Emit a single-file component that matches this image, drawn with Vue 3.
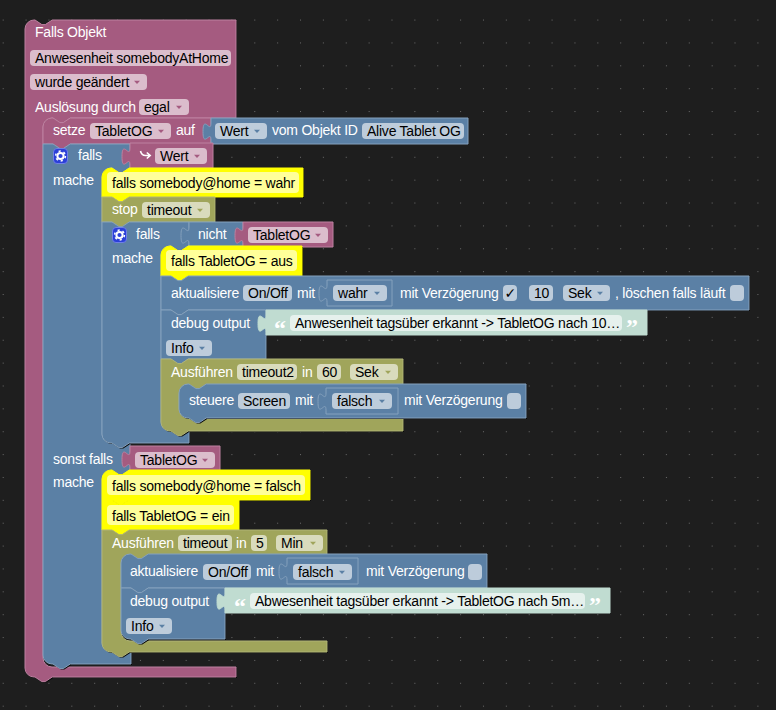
<script setup>
const N = 'l6.9,4.6 3.4,0 6.9,-4.6'
const NR = 'l-6.9,4.6 -3.4,0 -6.9,-4.6'
const R = 9

const top = (x, y, round) =>
  (round ? `M${x},${y + R} a${R},${R} 0 0 1 ${R},${-R}` : `M${x},${y}`) + ` H${x + 10} ${N}`
const bot = (x, y, round) =>
  `V${y} H${x + 27.2} ${NR} ` + (round ? `H${x + R} a${R},${R} 0 0 1 ${-R},${-R} Z` : `H${x} Z`)
const tab = (x, y) => `M${x},${y} V${y + 5} c0,11.4 -8,-9.1 -8,8.6 s8,-2.9 8,8.6`
const inner = (x, y1, y2, right) =>
  `V${y1} H${x + 27.2} ${NR} H${x + R} a${R},${R} 0 0 0 ${-R},${R} V${y2 - R} a${R},${R} 0 0 0 ${R},${R} H${right}`
const val = (x, y, r, b) => `${tab(x, y)} V${b} H${r} V${y} Z`

const C = {
  pink: { fill: '#a55b80', light: '#bd81a0' },
  blue: { fill: '#5b80a5', light: '#85a1bd' },
  olive: { fill: '#a0a55b', light: '#b0b476' },
  yellow: { fill: '#ffff00', light: '#ffff00' },
  mint: { fill: '#c0dcd1', light: '#c0dcd1' }
}

const stack = (c, d) => ({ c, d, dark: true })
const value = (c, d) => ({ c, d, dark: false })

const blocks = [
  stack('pink', `${top(25, 20, true)} H236 ${inner(43, 118, 667, 236)} ${bot(25, 677, true)}`),
  stack('pink', `${top(43, 118, true)} H211 ${bot(43, 144, false)}`),
  value('blue', val(211, 118, 468, 144)),
  stack('blue', `${top(43, 144, false)} H130 ${inner(102, 168, 443, 130)} V471 ${inner(102, 471, 652, 131)} ${bot(43, 664, true)}`),
  value('pink', val(130, 143, 213, 168)),
  stack('yellow', `${top(102, 168, true)} H303 ${bot(102, 197, false)}`),
  stack('olive', `${top(102, 197, false)} H215 ${bot(102, 222, false)}`),
  stack('blue', `${top(102, 222, false)} H189 ${inner(161, 246, 431, 189)} ${bot(102, 443, true)}`),
  value('blue', val(189, 222, 243, 246)),
  value('pink', val(243, 222, 333, 247)),
  stack('yellow', `${top(161, 246, true)} H302 ${bot(161, 276, false)}`),
  stack('blue', `${top(161, 276, false)} H749 ${bot(161, 310, false)}`),
  value('blue', val(327, 280, 392, 306)),
  stack('blue', `${top(161, 310, false)} H266 ${bot(161, 359, false)}`),
  value('mint', val(266, 310, 647, 335)),
  stack('olive', `${top(161, 359, false)} H403 ${inner(179, 385, 418, 403)} ${bot(161, 431, true)}`),
  stack('blue', `${top(179, 384, true)} H526 ${bot(179, 418, true)}`),
  value('blue', val(326, 388, 398, 414)),
  value('pink', val(130, 446, 220, 471)),
  stack('yellow', `${top(102, 470, true)} H310 ${bot(102, 500, false)}`),
  stack('yellow', `${top(102, 500, false)} H239 ${bot(102, 530, false)}`),
  stack('olive', `${top(102, 530, false)} H327 ${inner(121, 555, 641, 327)} ${bot(102, 652, true)}`),
  stack('blue', `${top(121, 554, true)} H487 ${bot(121, 588, false)}`),
  value('blue', val(287, 558, 358, 584)),
  stack('blue', `${top(121, 588, false)} H225 ${bot(121, 639, true)}`),
  value('mint', val(225, 588, 610, 613))
].map((b) => ({ ...b, ...C[b.c] }))

/* editable fields: x, y, width, height, text, has dropdown arrow, arrow colour */
const f = (x, y, w, text, c, h = 16) => ({ x, y, w, h, text, arrow: c ? C[c].fill : null })
const fields = [
  f(30, 50, 201, 'Anwesenheit somebodyAtHome'),
  f(30, 74, 117, 'wurde geändert', 'pink'),
  f(139, 99, 50, 'egal', 'pink'),
  f(90, 123, 81, 'TabletOG', 'pink'),
  f(215, 123, 52, 'Wert', 'blue'),
  f(362, 123, 102, 'Alive Tablet OG'),
  f(155, 148, 52, 'Wert', 'pink'),
  f(107, 172, 192, 'falls somebody@home = wahr', null, 21),
  f(142, 202, 68, 'timeout', 'olive'),
  f(248, 227, 80, 'TabletOG', 'pink'),
  f(166, 250, 131, 'falls TabletOG = aus', null, 21),
  f(243, 285, 49, 'On/Off'),
  f(333, 285, 54, 'wahr', 'blue'),
  f(529, 285, 24, '10'),
  f(563, 285, 47, 'Sek', 'blue'),
  f(290, 315, 332, 'Anwesenheit tagsüber erkannt -> TabletOG nach 10…'),
  f(166, 340, 46, 'Info', 'blue'),
  f(237, 364, 60, 'timeout2'),
  f(317, 364, 24, '60'),
  f(350, 364, 48, 'Sek', 'olive'),
  f(238, 393, 52, 'Screen'),
  f(332, 393, 60, 'falsch', 'blue'),
  f(135, 452, 80, 'TabletOG', 'pink'),
  f(107, 475, 198, 'falls somebody@home = falsch', null, 20),
  f(107, 505, 127, 'falls TabletOG = ein', null, 20),
  f(178, 535, 54, 'timeout'),
  f(251, 535, 16, '5'),
  f(276, 535, 47, 'Min', 'olive'),
  f(203, 564, 48, 'On/Off'),
  f(293, 564, 59, 'falsch', 'blue'),
  f(250, 593, 335, 'Abwesenheit tagsüber erkannt -> TabletOG nach 5m…'),
  f(126, 618, 46, 'Info', 'blue')
]

const checks = [
  { x: 503, y: 285, on: true },
  { x: 730, y: 285, on: false },
  { x: 507, y: 393, on: false },
  { x: 468, y: 564, on: false }
]

const labels = [
  [35, 37, 'Falls Objekt'],
  [35, 112, 'Auslösung durch'],
  [53, 135, 'setze'],
  [176, 135, 'auf'],
  [272, 135, 'vom Objekt ID'],
  [78, 160, 'falls'],
  [53, 185, 'mache'],
  [112, 214, 'stop'],
  [136, 239, 'falls'],
  [198, 239, 'nicht'],
  [112, 263, 'mache'],
  [171, 298, 'aktualisiere'],
  [297, 298, 'mit'],
  [400, 298, 'mit Verzögerung'],
  [615, 298, ', löschen falls läuft'],
  [171, 328, 'debug output'],
  [171, 377, 'Ausführen'],
  [302, 377, 'in'],
  [189, 405, 'steuere'],
  [295, 405, 'mit'],
  [404, 405, 'mit Verzögerung'],
  [53, 464, 'sonst falls'],
  [53, 487, 'mache'],
  [112, 548, 'Ausführen'],
  [236, 548, 'in'],
  [130, 576, 'aktualisiere'],
  [256, 576, 'mit'],
  [366, 576, 'mit Verzögerung'],
  [130, 606, 'debug output']
]

const quotes = [
  [274, 335.5, '“'],
  [626, 335, '”'],
  [234, 613.5, '“'],
  [589, 613, '”']
]

const gears = [
  { x: 53, y: 148 },
  { x: 112, y: 227 }
]

const arrowPts = (fd) => {
  const cx = fd.x + fd.w - 10
  const cy = fd.y + fd.h / 2 + 0.2
  return `${cx - 3},${cy - 1.5} ${cx + 3},${cy - 1.5} ${cx},${cy + 1.8}`
}
</script>

<template>
  <svg class="workspace" width="776" height="710" viewBox="0 0 776 710">
    <defs>
      <pattern id="grid" width="22.87" height="22.87" x="2.7" y="-3.3" patternUnits="userSpaceOnUse">
        <rect x="0" y="0" width="1" height="1" fill="#6a6a6a" />
      </pattern>
    </defs>
    <rect width="776" height="710" fill="#1e1e1e" />
    <rect width="776" height="710" fill="url(#grid)" />

    <g v-for="(b, i) in blocks" :key="i">
      <path v-if="b.dark" :d="b.d" fill="#0a0a0a" transform="translate(1,1)" />
      <path :d="b.d" :fill="b.fill" :stroke="b.light" stroke-width="1" />
    </g>

    <g v-for="(fd, i) in fields" :key="'f' + i">
      <rect class="field" :x="fd.x" :y="fd.y" :width="fd.w" :height="fd.h" rx="4" ry="4" />
      <text class="fieldtext" :x="fd.x + 5" :y="fd.y + (fd.h > 16 ? 15.5 : 12.5)">{{ fd.text }}</text>
      <polygon v-if="fd.arrow" :points="arrowPts(fd)" :fill="fd.arrow" />
    </g>

    <g v-for="(c, i) in checks" :key="'c' + i">
      <rect class="field" :x="c.x" :y="c.y" width="14" height="16" rx="4" ry="4" />
      <text v-if="c.on" class="check" :x="c.x + 1.5" :y="c.y + 13">✓</text>
    </g>

    <text v-for="(l, i) in labels" :key="'l' + i" class="label" :x="l[0]" :y="l[1]">{{ l[2] }}</text>

    <text v-for="(q, i) in quotes" :key="'q' + i" class="quote" :x="q[0]" :y="q[1]">{{ q[2] }}</text>

    <g v-for="(g, i) in gears" :key="'g' + i" :transform="`translate(${g.x},${g.y})`">
      <rect x="0.5" y="0.5" width="14" height="15" rx="3.5" fill="#2b3fd8" stroke="#6f7fe6" />
      <circle cx="7.5" cy="8" r="3.1" fill="none" stroke="#fff" stroke-width="2" />
      <circle cx="7.5" cy="8" r="4.9" fill="none" stroke="#fff" stroke-width="1.5" stroke-dasharray="2.2 2.93" />
    </g>

    <path d="M140.5,151 q1,4.5 5,4.5 h4.5 m-3.2,-3 l3.4,3 l-3.4,3" fill="none" stroke="#fff" stroke-width="1.6" />
  </svg>
</template>

<style scoped>
.workspace {
  display: block;
}
.field {
  fill: #fff;
  fill-opacity: 0.6;
}
.fieldtext,
.label {
  font-family: "Liberation Sans", Arial, sans-serif;
  font-size: 14px;
  letter-spacing: -0.23px;
}
.fieldtext {
  fill: #000;
}
.label {
  fill: #fff;
}
.check {
  font-family: "DejaVu Sans", sans-serif;
  font-size: 14px;
  fill: #000;
}
.quote {
  font-family: "Liberation Serif", serif;
  font-weight: 700;
  font-size: 24px;
  fill: #fff;
}
</style>

<style>
body {
  margin: 0;
  background: #1e1e1e;
}
</style>
